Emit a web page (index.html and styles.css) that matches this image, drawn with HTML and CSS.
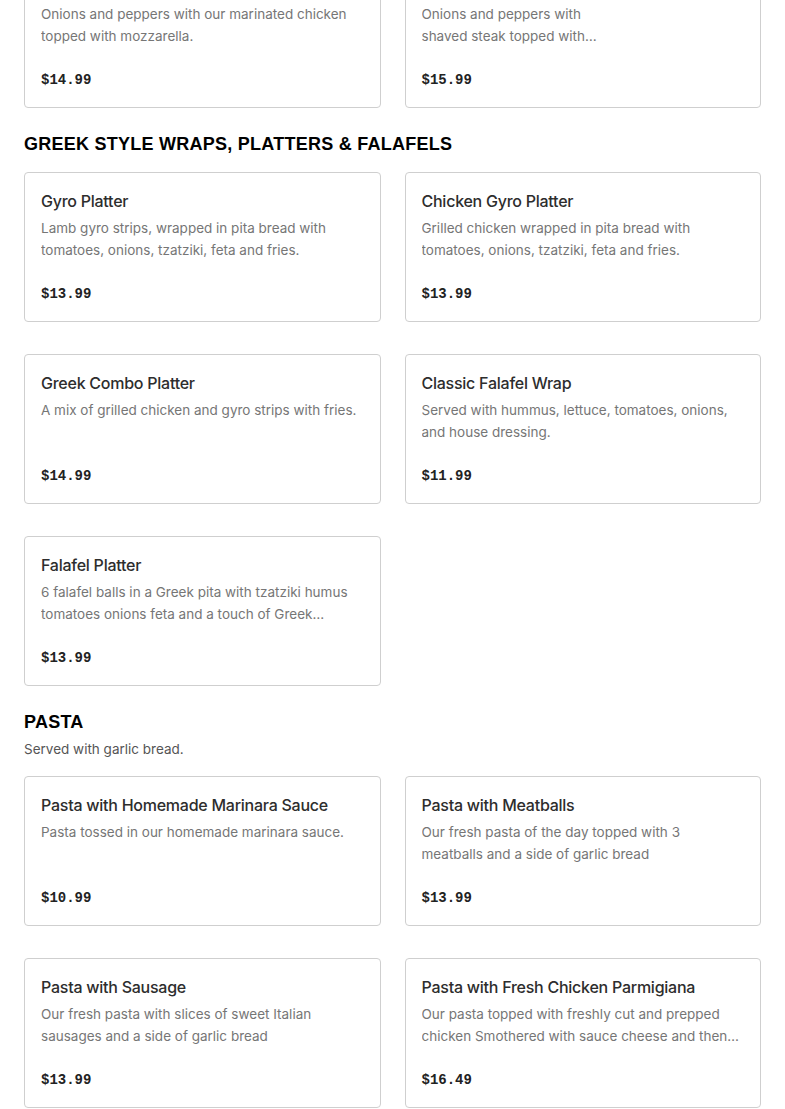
FILE: index.html
```html
<!DOCTYPE html>
<html>
<head>
<meta charset="utf-8">
<link rel="stylesheet" href="styles.css">
</head>
<body>
<main class="page">
  <section class="section first">
    <div class="grid">
      <article class="card">
        <h3 class="title">Chicken Cheesesteak</h3>
        <p class="desc">Onions and peppers with our marinated chicken topped with mozzarella.</p>
        <div class="price">$14.99</div>
      </article>
      <article class="card">
        <h3 class="title">Philly Cheesesteak</h3>
        <p class="desc">Onions and peppers with<br>shaved steak topped with<br>mozzarella.</p>
        <div class="price">$15.99</div>
      </article>
    </div>
  </section>

  <section class="section">
    <header class="head">
      <h2 class="heading">GREEK STYLE WRAPS, PLATTERS &amp; FALAFELS</h2>
    </header>
    <div class="grid">
      <article class="card">
        <h3 class="title">Gyro Platter</h3>
        <p class="desc">Lamb gyro strips, wrapped in pita bread with tomatoes, onions, tzatziki, feta and fries.</p>
        <div class="price">$13.99</div>
      </article>
      <article class="card">
        <h3 class="title">Chicken Gyro Platter</h3>
        <p class="desc">Grilled chicken wrapped in pita bread with tomatoes, onions, tzatziki, feta and fries.</p>
        <div class="price">$13.99</div>
      </article>
      <article class="card">
        <h3 class="title">Greek Combo Platter</h3>
        <p class="desc">A mix of grilled chicken and gyro strips with fries.</p>
        <div class="price">$14.99</div>
      </article>
      <article class="card">
        <h3 class="title">Classic Falafel Wrap</h3>
        <p class="desc">Served with hummus, lettuce, tomatoes, onions, and house dressing.</p>
        <div class="price">$11.99</div>
      </article>
      <article class="card">
        <h3 class="title">Falafel Platter</h3>
        <p class="desc">6 falafel balls in a Greek pita with tzatziki humus tomatoes onions feta and a touch of Greek dressing with a side of fries.</p>
        <div class="price">$13.99</div>
      </article>
    </div>
  </section>

  <section class="section">
    <header class="head">
      <h2 class="heading">PASTA</h2>
      <p class="sub">Served with garlic bread.</p>
    </header>
    <div class="grid">
      <article class="card">
        <h3 class="title">Pasta with Homemade Marinara Sauce</h3>
        <p class="desc">Pasta tossed in our homemade marinara sauce.</p>
        <div class="price">$10.99</div>
      </article>
      <article class="card">
        <h3 class="title">Pasta with Meatballs</h3>
        <p class="desc">Our fresh pasta of the day topped with 3 meatballs and a side of garlic bread</p>
        <div class="price">$13.99</div>
      </article>
      <article class="card">
        <h3 class="title">Pasta with Sausage</h3>
        <p class="desc">Our fresh pasta with slices of sweet Italian sausages and a side of garlic bread</p>
        <div class="price">$13.99</div>
      </article>
      <article class="card">
        <h3 class="title">Pasta with Fresh Chicken Parmigiana</h3>
        <p class="desc">Our pasta topped with freshly cut and prepped chicken Smothered with sauce cheese and then baked to perfection.</p>
        <div class="price">$16.49</div>
      </article>
    </div>
  </section>
</main>
</body>
</html>
```
FILE: styles.css
```css
html, body {
  margin: 0;
  padding: 0;
  background: #fff;
}
body {
  font-family: "Inter", "Liberation Sans", sans-serif;
  color: #2d2d2d;
}
.page {
  padding: 0 24px;
  margin-top: -42px;
}
.section {
  display: flex;
  flex-direction: column;
}
.section + .section {
  margin-top: 24px;
}
.head {
  display: flex;
  flex-direction: column;
  gap: 4px;
  margin-bottom: 16px;
}
.heading {
  margin: 0;
  font-family: "Liberation Sans", Arial, sans-serif;
  font-weight: 900;
  font-size: 18px;
  line-height: 24px;
  color: #000;
  letter-spacing: 0.25px;
}
.sub {
  margin: 0;
  font-size: 13.5px;
  line-height: 22px;
  color: #555;
}
.grid {
  display: grid;
  grid-template-columns: 1fr 1fr;
  column-gap: 24px;
  row-gap: 32px;
}
.card {
  border: 1px solid #cfcfcf;
  border-radius: 4px;
  padding: 16px;
  display: flex;
  flex-direction: column;
}
.title {
  margin: 0;
  font-size: 16px;
  line-height: 24px;
  font-weight: 500;
  letter-spacing: -0.25px;
  color: #2d2d2d;
}
.desc {
  margin: 4px 0 0;
  font-size: 13.5px;
  line-height: 22px;
  height: 44px;
  color: #767676;
  display: -webkit-box;
  -webkit-line-clamp: 2;
  -webkit-box-orient: vertical;
  overflow: hidden;
}
.price {
  margin-top: 22px;
  font-family: "Liberation Mono", "DejaVu Sans Mono", monospace;
  font-weight: 700;
  font-size: 14px;
  line-height: 22px;
  color: #222;
}
```
